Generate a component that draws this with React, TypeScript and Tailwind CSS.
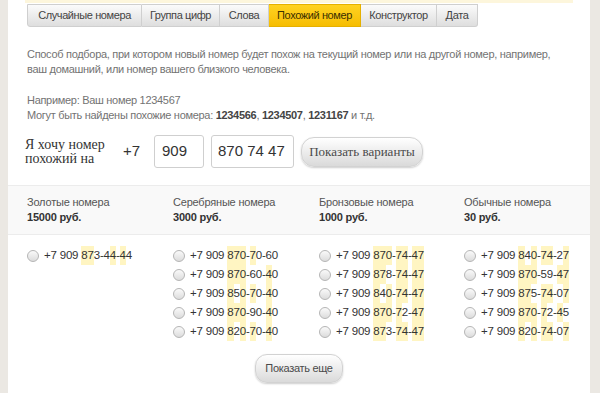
import React from 'react'

const SOURCE = '8707447'

const TABS = [
  { label: 'Случайные номера', w: 'w-[115px]' },
  { label: 'Группа цифр', w: 'w-[78px]' },
  { label: 'Слова', w: 'w-[49px]' },
  { label: 'Похожий номер', w: 'w-[92px]', active: true },
  { label: 'Конструктор', w: 'w-[76px]' },
  { label: 'Дата', w: 'w-[41px]' },
]

const COLUMNS = [
  { title: 'Золотые номера', price: '15000 руб.', numbers: ['873-44-44'] },
  {
    title: 'Серебряные номера',
    price: '3000 руб.',
    numbers: ['870-70-60', '870-60-40', '850-70-40', '870-90-40', '820-70-40'],
  },
  {
    title: 'Бронзовые номера',
    price: '1000 руб.',
    numbers: ['870-74-47', '878-74-47', '840-74-47', '870-72-47', '873-74-47'],
  },
  {
    title: 'Обычные номера',
    price: '30 руб.',
    numbers: ['840-74-27', '870-59-47', '875-74-07', '870-72-45', '820-74-07'],
  },
]

// digits that sit in the same place as in the wanted number get a yellow mark
function Number({ value }: { value: string }) {
  let idx = 0
  return (
    <span className="inline-flex">
      <span className="mr-[3px]">+7 909</span>
      {value.split('').map((ch, i) => {
        if (ch === '-') return <span key={i}>-</span>
        const hit = SOURCE[idx] === ch
        idx++
        return (
          <span key={i} className={hit ? 'bg-[#fff5c2]' : ''}>
            {ch}
          </span>
        )
      })}
    </span>
  )
}

function Radio() {
  return (
    <span className="w-[12px] h-[12px] rounded-full border border-[#b5b5b5] bg-gradient-to-b from-[#fafafa] to-[#dcdcdc] shrink-0" />
  )
}

export default function App() {
  return (
    <div className="w-[600px] h-[393px] overflow-hidden flex bg-[#ebe8e3] font-['Liberation_Sans',Arial,sans-serif]">
      <div className="w-[8px] shrink-0" />
      <div className="w-[582px] shrink-0 bg-white flex flex-col">
        <div className="ml-[17px] w-[548px] h-[3px] bg-[#fdf6dc]" />

        {/* Tabs */}
        <div className="flex ml-[19px] mt-[1px] h-[23px]">
          {TABS.map((t, i) => (
            <div
              key={t.label}
              className={`${t.w} flex items-center justify-center text-[11px] tracking-[-0.4px] border-y border-r ${
                i === 0 ? 'border-l rounded-bl-[3px]' : ''
              } ${i === TABS.length - 1 ? 'rounded-br-[3px]' : ''} ${
                t.active
                  ? 'bg-gradient-to-b from-[#ffd21f] to-[#f6bd00] border-[#e5b000] text-[#3a3000]'
                  : 'bg-gradient-to-b from-[#fbfbfb] to-[#dedede] border-[#cfcfcf] text-[#444]'
              }`}
            >
              {t.label}
            </div>
          ))}
        </div>

        {/* Description */}
        <div className="ml-[19px] mt-[20px] text-[11px] leading-[15px] tracking-[-0.3px] text-[#737373]">
          <p className="whitespace-nowrap">
            Способ подбора, при котором новый номер будет похож на текущий номер или на другой номер, например,
          </p>
          <p>ваш домашний, или номер вашего близкого человека.</p>
          <p className="mt-[16px]">Например: Ваш номер 1234567</p>
          <p>
            Могут быть найдены похожие номера: <b className="text-[#444]">1234566</b>,{' '}
            <b className="text-[#444]">1234507</b>, <b className="text-[#444]">1231167</b> и т.д.
          </p>
        </div>

        {/* Search row */}
        <div className="flex items-center ml-[17px] mt-[12px] h-[33px]">
          <div className="w-[98px] font-['Liberation_Serif',serif] text-[14px] leading-[14px] text-[#333]">
            Я хочу номер
            <br />
            похожий на
          </div>
          <div className="w-[31px] text-[15px] text-[#333]">+7</div>
          <div className="w-[50px] h-[33px] rounded-[3px] border border-[#cfcfcf] flex items-center pl-[7px] text-[15px] text-[#333]">
            909
          </div>
          <div className="ml-[7px] w-[83px] h-[33px] rounded-[3px] border border-[#cfcfcf] flex items-center pl-[6px] text-[15px] text-[#333]">
            870 74 47
          </div>
          <button className="ml-[7px] w-[122px] h-[30px] rounded-[13px] border border-[#d2d2d2] bg-gradient-to-b from-[#ffffff] to-[#dadada] shadow-[0_1px_2px_rgba(0,0,0,0.2)] font-['Liberation_Serif',serif] text-[13px] text-[#4a4a4a]">
            Показать варианты
          </button>
        </div>

        {/* Categories header */}
        <div className="mt-[17px] border-t border-b border-[#ececec] bg-[#f9f9f9] h-[50px] pl-[19px] grid grid-cols-[146px_146px_145px_1fr] content-center text-[11px] leading-[15px] tracking-[-0.2px]">
          {COLUMNS.map((c) => (
            <div key={c.title}>
              <div className="text-[#555]">{c.title}</div>
              <div className="font-bold text-[#333]">{c.price}</div>
            </div>
          ))}
        </div>

        {/* Numbers */}
        <div className="pl-[19px] pt-[11px] grid grid-cols-[146px_146px_145px_1fr]">
          {COLUMNS.map((c) => (
            <div key={c.title} className="flex flex-col">
              {c.numbers.map((n) => (
                <div key={n} className="flex items-center h-[19px] gap-[5px] text-[11.5px] leading-[19px] tracking-[-0.2px] text-[#333]">
                  <Radio />
                  <Number value={n} />
                </div>
              ))}
            </div>
          ))}
        </div>

        <div className="flex justify-center mt-[13px]">
          <button className="w-[88px] h-[29px] rounded-[12px] border border-[#d2d2d2] bg-gradient-to-b from-[#ffffff] to-[#dadada] shadow-[0_1px_2px_rgba(0,0,0,0.2)] text-[11px] tracking-[-0.3px] text-[#4a4a4a]">
            Показать еще
          </button>
        </div>
      </div>
      <div className="flex-1" />
    </div>
  )
}
